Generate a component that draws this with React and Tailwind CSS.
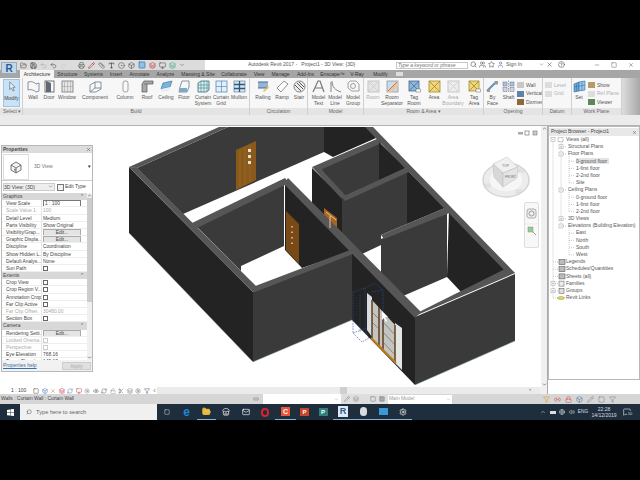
import { FolderOpen, Save, Undo2, Redo2, Printer, Pencil, Ruler, Type, CircleDot, Search, Users, Star, User, HelpCircle, Minus, Square, X, ChevronDown, ChevronUp, Settings, Volume2, Globe, MessageSquare, Store, Mail, Monitor, Sun, Box, Eye, Scissors, RefreshCw, Filter, Link2, Lock, Layers } from 'lucide-react';

const S = { fill: 'none', stroke: '#6a7a8c', strokeWidth: 0.8 };

const icons = {
  modify: <path d="M4 1.5 L4 10 L6 8 L7.6 11.5 L9 10.8 L7.4 7.5 L10 7.3 Z" fill="#dff0fb" stroke="#5a6a7a" strokeWidth="0.7" />,
  wall: <path d="M1 2 C4 1 7 2 9 4 L12 3 L12 11 L9 12 C7 10 4 9 1 10 Z" fill="#f2f2f2" {...S} />,
  door: <><rect x="2" y="1" width="9" height="11" fill="#fafafa" stroke="#555" strokeWidth="0.8" /><path d="M3 1 L8 3 L8 12 L3 12 Z" fill="#5d6975" /></>,
  window: <><rect x="1" y="1" width="11" height="11" fill="#e6e6e6" stroke="#777" strokeWidth="0.8" /><path d="M6.5 1 V12 M1 6.5 H12 M3.5 1 V12 M9.5 1 V12" stroke="#999" strokeWidth="0.5" /></>,
  component: <><path d="M1 5 L6 2 L12 2 L12 9 L7 12 L1 12 Z" fill="#ececec" {...S} /><path d="M6 2 V8 L1 12 M6 8 H12" {...S} /></>,
  column: <><rect x="4" y="1" width="5" height="11" rx="2" fill="#f8f8f8" stroke="#8a8a8a" strokeWidth="0.8" /></>,
  roof: <><path d="M1 4 L3 1 L12 1 L12 4 L6 4 L6 12 L1 12 Z" fill="#a8a8a8" stroke="#555" strokeWidth="0.7" /><path d="M3 4 H6" stroke="#555" strokeWidth="0.6" /></>,
  ceiling: <><path d="M3 3 L12 1 L10 7 L1 9 Z" fill="#78b4e0" stroke="#48789c" strokeWidth="0.7" /><path d="M1 9 L10 7 L9 11 L1 12 Z" fill="#e6eef4" /></>,
  floor: <><path d="M4 1 H11 L11 7 L9 12 H1 L2 7 Z" fill="#d6dfe8" {...S} /><path d="M1 8 L9 8 L9 12 L1 12 Z" fill="#7fa9c8" /></>,
  curtainSystem: <><path d="M1 3 L4 1 L12 1 L12 10 L9 12 L1 12 Z" fill="#d8eef0" stroke="#2f6e78" strokeWidth="0.8" /><path d="M4 1 V12 M7 1 V12 M10 1 V12 M1 5 H12 M1 8 H12" stroke="#2f6e78" strokeWidth="0.5" /></>,
  curtainGrid: <><rect x="1" y="1" width="11" height="11" fill="#e2eef8" stroke="#5b8fbc" strokeWidth="0.8" /><path d="M6.5 1 V12 M1 6.5 H12" stroke="#5b8fbc" strokeWidth="0.7" /></>,
  mullion: <><rect x="1" y="1" width="11" height="11" fill="#d8e6f2" stroke="#4a7396" strokeWidth="0.6" /><path d="M6.5 1 V12 M1 4.5 H12 M1 8.5 H12" stroke="#2e5878" strokeWidth="1.3" /></>,
  railing: <><path d="M1 2 H11 M2 2 V8 M4 2 V8 M6 2 V8 M8 2 V8 M10 2 V8 M1 8 H11" stroke="#3a6ea8" strokeWidth="1" /><path d="M6 11 L11 6 L12 7 L7 12 Z" fill="#e8b93a" /></>,
  ramp: <path d="M1 8 L8 1 L12 4 L5 12 Z" fill="#fbfbfb" stroke="#777" strokeWidth="0.8" />,
  stair: <><circle cx="6.5" cy="6.5" r="5.5" fill="#eee" stroke="#666" strokeWidth="0.8" /><path d="M2 5 L8 11 M4 3 L10 9 M6 2 L11 7" stroke="#555" strokeWidth="1" /></>,
  modelText: <path d="M1 12 L6 1 L8 1 L12 12 M3 8 H10" fill="none" stroke="#777" strokeWidth="1.2" />,
  modelLine: <path d="M3 1 C3 7 6 10 12 12 M2 2 V12" fill="none" stroke="#666" strokeWidth="0.8" />,
  modelGroup: <><path d="M3 1 H9 L12 4 V11 H5 L1 8 V3 Z" fill="none" stroke="#8a8a8a" strokeWidth="0.8" /><circle cx="6" cy="6" r="2.5" fill="none" stroke="#8a8a8a" strokeWidth="0.8" /></>,
  room: <><rect x="1" y="1" width="11" height="11" fill="#e4e4e4" stroke="#c4c4c4" /><path d="M2 2 L11 11 M11 2 L2 11" stroke="#cfcfcf" /></>,
  separator: <><rect x="1" y="1" width="11" height="11" fill="#c8dcec" stroke="#8a8a8a" strokeWidth="0.7" /><path d="M12 1 L1 12 H6 L12 6 Z" fill="#e8c89a" /><path d="M2 11 L11 2" stroke="#c05a3a" strokeWidth="0.8" /></>,
  tagRoom: <><rect x="1" y="1" width="10" height="10" fill="#8db6d8" stroke="#3f6c92" strokeWidth="0.8" /><path d="M1 1 L11 11 M11 1 L1 11" stroke="#3f6c92" strokeWidth="0.7" /><rect x="8" y="9" width="4.5" height="3" fill="#fff" stroke="#666" strokeWidth="0.5" /></>,
  area: <><rect x="1" y="1" width="11" height="11" fill="#f2d675" stroke="#a08a3c" strokeWidth="0.8" /><path d="M1 1 L12 12 M12 1 L1 12" stroke="#8f7a30" strokeWidth="0.7" /></>,
  areaBoundary: <><rect x="1" y="1" width="11" height="11" fill="#ececec" stroke="#c8c8c8" /><path d="M2 2 L11 11 M11 2 L2 11" stroke="#d4d4d4" /></>,
  tagArea: <><rect x="1" y="1" width="10" height="10" fill="#f2d675" stroke="#a08a3c" strokeWidth="0.8" /><path d="M1 1 L11 11 M11 1 L1 11" stroke="#8f7a30" strokeWidth="0.7" /><rect x="8" y="9" width="4.5" height="3" fill="#fff" stroke="#666" strokeWidth="0.5" /></>,
  byFace: <><path d="M1 11 L9 3" stroke="#5b95c8" strokeWidth="2.2" /><rect x="8.5" y="1" width="3.5" height="3.5" fill="#9a9a9a" /><rect x="1" y="9" width="3" height="3" fill="#9a9a9a" /></>,
  shaft: <><path d="M6.5 0.5 V12.5" stroke="#777" strokeWidth="0.7" strokeDasharray="1.5 1" /><rect x="1" y="2" width="4" height="4" fill="#a9c3da" stroke="#557" strokeWidth="0.4" /><rect x="8" y="2" width="4" height="4" fill="#a9c3da" stroke="#557" strokeWidth="0.4" /><rect x="1" y="7.5" width="4" height="4" fill="#cfd8e0" stroke="#557" strokeWidth="0.4" /><rect x="8" y="7.5" width="4" height="4" fill="#cfd8e0" stroke="#557" strokeWidth="0.4" /></>,
  set: <><path d="M1 4 L6 2 L6 11 L1 12 Z" fill="#6ea6d8" stroke="#2f6ea4" strokeWidth="0.6" /><path d="M6 2 L12 1 L12 10 L6 11 Z" fill="#9cc6e8" stroke="#2f6ea4" strokeWidth="0.6" /><path d="M1 7 L12 5 M3.5 3 V11.5 M9 1.5 V10.5" stroke="#2f6ea4" strokeWidth="0.5" /></>,
};

function Tool({ w, label, sub, icon, dim }) {
  return (
    <div className={`${w} shrink-0 flex flex-col items-center pt-[2px] ${dim ? 'text-[#aaaaaa]' : 'text-[#555555]'}`}>
      <svg width="13" height="13" viewBox="0 0 13 13">{icons[icon]}</svg>
      <div className="mt-px text-[5px] leading-[6px] whitespace-nowrap">{label}</div>
      {sub && <div className="text-[5px] leading-[6px] whitespace-nowrap">{sub}</div>}
    </div>
  );
}

function Group({ w, title, arrow, children }) {
  return (
    <div className={`${w} shrink-0 flex flex-col border-r border-[#d0d0d0]`}>
      <div className="h-[30px] flex overflow-hidden">{children}</div>
      <div className="h-[7px] bg-[#e4e4e4] text-center text-[5px] leading-[7px] text-[#666666] whitespace-nowrap">
        {title}{arrow && ' ▾'}
      </div>
    </div>
  );
}

function MiniRow({ color, label, dim }) {
  return (
    <div className={`flex items-center gap-[2px] h-[8.5px] text-[5px] whitespace-nowrap ${dim ? 'text-[#b0b0b0]' : 'text-[#555555]'}`}>
      <span className={`w-[7px] h-[6px] shrink-0 ${color}`} />
      {label}
    </div>
  );
}

const tabs = [
  ['Architecture', 'w-[34px]'], ['Structure', 'w-[27px]'], ['Systems', 'w-[25px]'], ['Insert', 'w-[20px]'],
  ['Annotate', 'w-[27px]'], ['Analyze', 'w-[25px]'], ['Massing & Site', 'w-[40px]'], ['Collaborate', 'w-[32px]'],
  ['View', 'w-[18px]'], ['Manage', 'w-[25px]'], ['Add-Ins', 'w-[25px]'], ['Enscape™', 'w-[29px]'],
  ['V-Ray', 'w-[20px]'], ['Modify', 'w-[27px]'],
];

function TitleBar() {
  const q = 'shrink-0';
  return (
    <div className="h-[10px] flex items-center bg-white relative">
      <div className="w-[205px] h-full bg-[#dcdcdc] flex items-center gap-[3px] pl-[20px] text-[#555555]">
        <FolderOpen size={7} className={q} />
        <Save size={7} className={q} color="#222" />
        <Undo2 size={7} className={q} color="#aaa" />
        <Undo2 size={7} className={q} />
        <Redo2 size={7} className={q} color="#ccc" />
        <span className="w-[5px]" />
        <Printer size={7} className={q} />
        <Pencil size={7} className={q} color="#a33" />
        <Ruler size={7} className={q} />
        <Type size={7} className={q} color="#222" />
        <CircleDot size={7} className={q} />
        <Box size={7} className={q} />
        <Square size={8} className={q} fill="#8fc0e8" color="#2f6ea4" />
        <Layers size={7} className={q} color="#b33" />
        <Monitor size={7} className={q} />
        <Layers size={7} className={q} color="#3a7" />
        <ChevronDown size={6} className={q} />
      </div>
      <div className="w-[191px] shrink-0 pl-[43px] text-[5px] text-[#555555] whitespace-nowrap">Autodesk Revit 2017 -&nbsp;&nbsp; Project1 - 3D View: {'{3D}'}</div>
      <div className="w-[72px] h-[7px] shrink-0 bg-white border border-[#c8c8c8] text-[5px] leading-[5px] pl-[1px] italic text-[#777777] whitespace-nowrap">Type a keyword or phrase</div>
      <div className="flex items-center gap-[2px] pl-[2px] text-[#555555]">
        <Search size={7} />
        <Users size={7} />
        <Star size={7} />
        <User size={7} color="#4477aa" />
        <span className="text-[5.2px] whitespace-nowrap">Sign In</span>
        <ChevronDown size={5} className="ml-[15px]" />
        <X size={7} color="#2f5f8f" />
        <HelpCircle size={7} className="ml-[3px]" />
      </div>
      <div className="ml-auto flex items-center gap-[11px] pr-[6px] text-[#666666]">
        <Minus size={6} />
        <Square size={6} />
        <X size={6} />
      </div>
      <div className="absolute left-[1px] top-[2px] w-[16px] h-[12px] z-10 bg-[#c4d6e8] border border-[#9ab] flex items-center justify-center text-[10px] font-bold text-[#1f5f99]">R</div>
    </div>
  );
}

function TabBar() {
  return (
    <div className="h-[8px] bg-[#a6a6a6] flex items-end pl-[20px] text-[5px] text-[#333333]">
      {tabs.map(([t, w], i) => (
        <div key={t} className={`${w} shrink-0 h-full text-center leading-[8px] whitespace-nowrap ${i === 0 ? 'bg-[#f5f5f5]' : ''}`}>{t}</div>
      ))}
      <span className="ml-[2px] w-[7px] h-[4px] bg-[#dddddd] self-center" />
    </div>
  );
}

function Ribbon() {
  return (
    <div className="h-[37px] flex bg-[#f7f7f7]">
      <div className="w-[23px] shrink-0 flex flex-col border-r border-[#d0d0d0]">
        <div className="h-[30px] pl-[3px] pt-px">
          <div className="w-[17px] h-[28px] bg-[#c9e2f5] border border-[#9cc4e4] flex flex-col items-center text-[5px] leading-[6px] text-[#444444]">
            <svg width="12" height="13" viewBox="0 0 13 13">{icons.modify}</svg>
            <div className="mt-[2px]">Modify</div>
          </div>
        </div>
        <div className="h-[7px] bg-[#e4e4e4] pl-[3px] text-[5px] leading-[7px] text-[#666666] whitespace-nowrap">Select ▾</div>
      </div>
      <Group w="w-[227px]" title="Build">
        <span className="w-[2px]" />
        <Tool w="w-[16px]" label="Wall" icon="wall" />
        <Tool w="w-[16px]" label="Door" icon="door" />
        <Tool w="w-[20px]" label="Window" icon="window" />
        <Tool w="w-[36px]" label="Component" icon="component" />
        <Tool w="w-[24px]" label="Column" icon="column" />
        <Tool w="w-[20px]" label="Roof" icon="roof" />
        <Tool w="w-[18px]" label="Ceiling" icon="ceiling" />
        <Tool w="w-[18px]" label="Floor" icon="floor" />
        <Tool w="w-[20px]" label="Curtain" sub="System" icon="curtainSystem" />
        <Tool w="w-[16px]" label="Curtain" sub="Grid" icon="curtainGrid" />
        <Tool w="w-[20px]" label="Mullion" icon="mullion" />
      </Group>
      <Group w="w-[58px]" title="Circulation">
        <span className="w-[3px]" />
        <Tool w="w-[20px]" label="Railing" icon="railing" />
        <Tool w="w-[18px]" label="Ramp" icon="ramp" />
        <Tool w="w-[16px]" label="Stair" icon="stair" />
      </Group>
      <Group w="w-[56px]" title="Model">
        <span className="w-[2px]" />
        <Tool w="w-[17px]" label="Model" sub="Text" icon="modelText" />
        <Tool w="w-[16px]" label="Model" sub="Line" icon="modelLine" />
        <Tool w="w-[20px]" label="Model" sub="Group" icon="modelGroup" />
      </Group>
      <Group w="w-[120px]" title="Room & Area" arrow>
        <Tool w="w-[18px]" label="Room" icon="room" dim />
        <Tool w="w-[20px]" label="Room" sub="Separator" icon="separator" />
        <Tool w="w-[24px]" label="Tag" sub="Room" icon="tagRoom" />
        <Tool w="w-[16px]" label="Area" icon="area" />
        <Tool w="w-[22px]" label="Area" sub="Boundary" icon="areaBoundary" dim />
        <Tool w="w-[20px]" label="Tag" sub="Area" icon="tagArea" />
      </Group>
      <Group w="w-[59px]" title="Opening">
        <Tool w="w-[17px]" label="By" sub="Face" icon="byFace" />
        <Tool w="w-[15px]" label="Shaft" icon="shaft" />
        <div className="pt-[3px] pl-[1px]">
          <MiniRow color="bg-[#c8c8c8]" label="Wall" />
          <MiniRow color="bg-[#5b84a8]" label="Vertical" />
          <MiniRow color="bg-[#8a6a3a]" label="Dormer" />
        </div>
      </Group>
      <Group w="w-[29px]" title="Datum">
        <div className="pt-[3px] pl-[2px]">
          <MiniRow color="bg-[#dddddd]" label="Level" dim />
          <MiniRow color="bg-[#dddddd]" label="Grid" dim />
        </div>
      </Group>
      <Group w="w-[50px]" title="Work Plane">
        <Tool w="w-[14px]" label="Set" icon="set" />
        <div className="pt-[3px] pl-[2px]">
          <MiniRow color="bg-[#b89a6a]" label="Show" />
          <MiniRow color="bg-[#dddddd]" label="Ref  Plane" dim />
          <MiniRow color="bg-[#5a8a5a]" label="Viewer" />
        </div>
      </Group>
      <div className="flex-1 bg-gradient-to-r from-[#dddddd] to-[#a8a8a8]" />
    </div>
  );
}

const graphics = [
  ['View Scale', '1 : 100', 'input'], ['Scale Value    1:', '100', 'dim'], ['Detail Level', 'Medium'],
  ['Parts Visibility', 'Show Original'], ['Visibility/Grap...', 'Edit...', 'btn'], ['Graphic Displa...', 'Edit...', 'btn'],
  ['Discipline', 'Coordination'], ['Show Hidden L...', 'By Discipline'], ['Default Analys...', 'None'], ['Sun Path', '', 'check'],
];
const extents = [
  ['Crop View', '', 'check'], ['Crop Region V...', '', 'check'], ['Annotation Crop', '', 'check'], ['Far Clip Active', '', 'check'],
  ['Far Clip Offset', '30480.00', 'dim'], ['Section Box', '', 'check'],
];
const camera = [
  ['Rendering Setti...', 'Edit...', 'btn'], ['Locked Orienta...', '', 'dimcheck'], ['Perspective', '', 'dimcheck'], ['Eye Elevation', '768.16'], ['Target Elevation', '145.18'],
];

function PropRow({ row }) {
  const [k, v, t] = row;
  const dim = t === 'dim' || t === 'dimcheck';
  return (
    <div className="h-[7.2px] flex text-[4.9px] leading-[7px] border-b border-[#eeeeee] whitespace-nowrap overflow-hidden">
      <div className={`w-[40px] shrink-0 pl-[4px] overflow-hidden border-r border-[#e4e4e4] ${dim ? 'text-[#aaaaaa]' : 'text-[#444444]'}`}>{k}</div>
      <div className={`flex-1 pl-px ${dim ? 'text-[#aaaaaa]' : 'text-[#444444]'}`}>
        {t === 'btn' && <div className="w-[38px] h-[7px] bg-[#e4e4e4] border border-[#aaaaaa] text-center leading-[5px]">{v}</div>}
        {t === 'input' && <div className="w-[38px] h-[7px] bg-white border border-[#777777] leading-[5px] pl-px">{v}</div>}
        {(t === 'check' || t === 'dimcheck') && <div className={`w-[5px] h-[5px] mt-px bg-white border ${t === 'check' ? 'border-[#666666]' : 'border-[#cccccc]'}`} />}
        {(!t || t === 'dim') && v}
      </div>
    </div>
  );
}

function SectionHead({ title }) {
  return (
    <div className="h-[7.2px] bg-[#d8d8d8] flex justify-between px-[1px] text-[4.9px] leading-[7px] text-[#444444]">
      <span>{title}</span>
      <span className="pr-[2px]">⌃</span>
    </div>
  );
}

function Properties() {
  return (
    <div className="w-[97px] shrink-0 pt-[19px] pl-[1px]">
      <div className="w-[92px] h-[227px] bg-white border border-[#b8b8b8] flex flex-col">
        <div className="h-[7px] bg-[#dcdcdc] flex justify-between items-center px-[1px] text-[5px] font-bold text-[#444444]">
          Properties <X size={5} />
        </div>
        <div className="h-[27px] mt-px flex items-center border-b border-[#cccccc]">
          <div className="w-[26px] h-[26px] ml-px border border-[#dddddd] flex items-center justify-center">
            <svg width="12" height="13" viewBox="0 0 12 13">
              <path d="M6 1 L11 4 V9 L6 12 L1 9 V4 Z" fill="#f4f4f4" stroke="#555" strokeWidth="0.8" />
              <path d="M1 4 L6 7 L11 4 M6 7 V12" fill="none" stroke="#555" strokeWidth="0.8" />
              <path d="M4 9 V7.5 L6 8.5 V11 Z" fill="#7a8a96" />
            </svg>
          </div>
          <span className="ml-[5px] text-[5px] text-[#777777]">3D View</span>
          <span className="ml-auto mr-[1px] text-[5px] text-[#222222]">▾</span>
        </div>
        <div className="h-[12px] flex items-center text-[5px] text-[#444444]">
          <div className="w-[52px] h-[8px] ml-px bg-[#eeeeee] border border-[#cccccc] flex justify-between pr-px leading-[6px] whitespace-nowrap">
            3D View: (3D)<ChevronDown size={5} />
          </div>
          <div className="ml-[2px] w-[7px] h-[7px] border border-[#777777] bg-[#eef2f6]" />
          <span className="ml-px whitespace-nowrap">Edit Type</span>
        </div>
        <div className="flex-1 flex overflow-hidden">
          <div className="w-[85px] shrink-0 overflow-hidden">
            <SectionHead title="Graphics" />
            {graphics.map(r => <PropRow key={r[0]} row={r} />)}
            <SectionHead title="Extents" />
            {extents.map(r => <PropRow key={r[0]} row={r} />)}
            <SectionHead title="Camera" />
            {camera.map(r => <PropRow key={r[0]} row={r} />)}
          </div>
          <div className="flex-1 bg-[#f0f0f0] flex flex-col items-center justify-between">
            <ChevronUp size={5} />
            <div className="w-full h-[104px] bg-[#cdcdcd] mb-auto" />
            <ChevronDown size={5} />
          </div>
        </div>
        <div className="h-[11px] bg-[#f2f2f2] flex items-center justify-between pr-px text-[5px]">
          <span className="pl-px text-[#3a6ea8] underline whitespace-nowrap">Properties help</span>
          <span className="w-[29px] h-[8px] bg-[#e0e0e0] border border-[#cccccc] text-center leading-[6px] text-[#aaaaaa]">Apply</span>
        </div>
      </div>
    </div>
  );
}

const FACE = '#3a3a3a', DARK = '#232323', BAND = '#565656';
const model = [
  ['137,168 228,127 324,127 324,152 183,214', FACE],
  ['324,127 368,127 376,138 333,157 324,152', DARK],
  ['129,167 219,127 228,127 137,168', BAND],
  ['129,167 253,292 253,362 129,233', DARK],
  ['197,227 284,183 284,246 241,266 241,271', FACE],
  ['285,180 347,246 352,251 302,268 285,250', DARK],
  ['286,211 299,224 299,264 286,250', '#7a4a16'],
  ['192,223 285,178 289,183 197,228', BAND],
  ['129,167 137,167.5 260,290 253,292', BAND],
  ['312,168 342,197 342,233 312,203', DARK],
  ['324,208 337,218 337,232 324,220', '#a5651f'],
  ['320,168 379,142 379,181 343,197', FACE],
  ['312,167 320,168 347,197 342,199', BAND],
  ['312,167 379,138 384,142 320,170', BAND],
  ['379,142 407,169 379,181', DARK],
  ['342,198 407,170 407,224 381,235 381,245 362,254 342,233', FACE],
  ['407,170 445,208 407,224', DARK],
  ['342,197 407,167 411,171 345,201', BAND],
  ['381,239 447,211 447,277 403,296 381,275', FACE],
  ['449,210 507,272 462,293 447,277', DARK],
  ['381,235 447,207 452,212 384,239', BAND],
  ['365,127 373,127 515,273 507,273', BAND],
  ['253,292 352,253 352,320 253,362', FACE],
  ['250,288 350,250 353,254 255,292', BAND],
  ['352,253 415,317 415,385 352,320', DARK],
  ['284,184 288,178 421,312 415,318', BAND],
  ['415,317 515,274 515,341 415,385', FACE],
  ['415,316 515,273 507,268 421,311', BAND],
];

function Model() {
  return (
    <svg className="absolute inset-0" width="444" height="261" viewBox="97 126 444 261">
      {model.map(([p, c]) => <polygon key={p} points={p} fill={c} />)}
      <path d="M129 233 L253 362 L352 320 M415 385 L515 341" fill="none" stroke="#9fc79f" strokeWidth="0.5" />
      {/* upper door */}
      <polygon points="236,150 256,141 256,180 236,190" fill="#8a5a1c" />
      <path d="M240 150 V187 M245 147 V185 M250 145 V182" stroke="#9c6a28" strokeWidth="0.8" />
      <rect x="248" y="149" width="3" height="3" fill="#e8e0d0" />
      <rect x="248" y="155" width="3" height="3" fill="#e8e0d0" />
      <rect x="248" y="161" width="3" height="3" fill="#e8e0d0" />
      <path d="M292 226 V247" stroke="#d8d0c0" strokeWidth="1.5" strokeDasharray="1.5 4" />
      <path d="M326 212 L336 220 M330 216 V228" stroke="#e8c9a0" strokeWidth="1" />
      {/* glazed door in the selected wall */}
      <polygon points="367,293 372,297 372,337 367,330" fill="#d9dde0" />
      <polygon points="395,323 402,328 402,370 395,363" fill="#e4e6e4" />
      <polygon points="372,300 395,325 395,363 372,338" fill="#c4c4c0" />
      <path d="M372 300 V338 M379 307 V346 M383 312 V350 M395 325 V363" stroke="#5a3413" strokeWidth="1.4" />
      <path d="M383 322 L395 335 M383 332 L395 345 M383 342 L395 355 M372 312 L379 319 M372 322 L379 329" stroke="#6a5a48" strokeWidth="0.6" />
      <path d="M371 338 L396 363" stroke="#c07a1e" strokeWidth="2" />
      <path d="M353 292 L365 288 L375 283 L383 290 V328 M353 292 V333 L362 342 L369 338 M365 288 V330 L369 338 M353 333 L367 328 M372 292 L383 290 M360 295 V332" fill="none" stroke="#2c4fa0" strokeWidth="0.6" strokeDasharray="1.6 1" />
      <path d="M382 311 V320 L384 318 L386 322 L387 321 L385 317 L388 317 Z" fill="#fff" />
      {/* view cube */}
      <ellipse cx="506" cy="180" rx="23" ry="17" fill="#ececec" stroke="#d4d4d4" strokeWidth="1.5" />
      <ellipse cx="506" cy="180" rx="17" ry="12" fill="#f6f6f6" stroke="#e0e0e0" strokeWidth="0.5" />
      <polygon points="493,164 507,157 518,167 503,173" fill="#f0f0f0" stroke="#bbb" strokeWidth="0.5" />
      <polygon points="493,164 503,173 503,187 494,177" fill="#d8d8d8" stroke="#bbb" strokeWidth="0.5" />
      <polygon points="503,173 518,167 517,178 503,187" fill="#e4e4e4" stroke="#bbb" strokeWidth="0.5" />
      <text x="502" y="167" fontSize="3.5" fill="#777">TOP</text>
      <text x="505" y="178" fontSize="3.2" fill="#666">FRONT</text>
      <rect x="485" y="184" width="5" height="3" fill="#e4e4e4" stroke="#ccc" strokeWidth="0.4" />
      <rect x="516" y="190" width="5" height="3" fill="#e4e4e4" stroke="#ccc" strokeWidth="0.4" />
      <rect x="519" y="169" width="5" height="3" fill="#e4e4e4" stroke="#ccc" strokeWidth="0.4" />
      {/* navigation bar */}
      <rect x="524.5" y="202.5" width="14" height="45" rx="1.5" fill="#f8f8f8" stroke="#d0d0d0" strokeWidth="0.7" />
      <rect x="527" y="209" width="9" height="9" rx="2" fill="#eee" stroke="#999" strokeWidth="0.8" />
      <circle cx="531.5" cy="213.5" r="2.5" fill="none" stroke="#888" strokeWidth="0.8" />
      <path d="M525 224 H538" stroke="#ddd" strokeWidth="0.5" />
      <rect x="528" y="227" width="5" height="5" fill="#9cc79c" stroke="#6fa06f" strokeWidth="0.5" />
      <path d="M533 232 L536 235" stroke="#6f8f6f" strokeWidth="0.8" />
      {/* view state icons */}
      <rect x="518" y="132" width="5" height="2.5" fill="#aaa" />
      <rect x="525" y="131" width="4" height="4" fill="none" stroke="#888" strokeWidth="0.8" />
      <rect x="533" y="131" width="4" height="4" fill="#ccc" stroke="#777" strokeWidth="0.6" />
    </svg>
  );
}

function ViewBar() {
  const small = [
    [Square, '#555'], [Box, '#3a78b8'], [X, '#d08a2a'], [Layers, '#c24'], [RefreshCw, '#5a8abf'], [Monitor, '#b55'],
    [Sun, '#778'], [Eye, '#666'], [RefreshCw, '#666'], [Lock, '#999'], [Scissors, '#777'], [Layers, '#777'], [Settings, '#777'], [Filter, '#557'],
  ];
  return (
    <div className="h-[7px] flex bg-[#eeeeee]">
      <div className="w-[157px] shrink-0 bg-white flex items-center">
        <span className="w-[33px] shrink-0 pl-[11px] text-[5px] text-[#444444] whitespace-nowrap">1 : 100</span>
        <div className="flex items-center gap-[2.5px]">
          {small.map(([Ic, c], i) => <Ic key={i} size={6} color={c} className="shrink-0" />)}
          <ChevronDown size={5} className="rotate-90 shrink-0" />
        </div>
      </div>
      <div className="flex-1 bg-[#ebebeb] relative">
        <div className="absolute left-[183px] top-0 w-[7px] h-full bg-[#cfcfcf]" />
        <span className="absolute right-[9px] -top-[1px] text-[5px] text-[#333333]">›</span>
      </div>
      <div className="w-[7px] bg-[#f0f0f0]" />
    </div>
  );
}

const tree = [
  ['Views (all)', 'pl-[17px]'],
  ['Structural Plans', 'pl-[19px]'],
  ['Floor Plans', 'pl-[19px]'],
  ['0-ground floor', 'pl-[27px]', 'sel'],
  ['1-first floor', 'pl-[27px]'],
  ['2-2nd floor', 'pl-[27px]'],
  ['Site', 'pl-[27px]'],
  ['Ceiling Plans', 'pl-[19px]'],
  ['0-ground floor', 'pl-[27px]'],
  ['1-first floor', 'pl-[27px]'],
  ['2-2nd floor', 'pl-[27px]'],
  ['3D Views', 'pl-[19px]'],
  ['Elevations (Building Elevation)', 'pl-[19px]'],
  ['East', 'pl-[27px]'],
  ['North', 'pl-[27px]'],
  ['South', 'pl-[27px]'],
  ['West', 'pl-[27px]'],
  ['Legends', 'pl-[17px]'],
  ['Schedules/Quantities', 'pl-[17px]'],
  ['Sheets (all)', 'pl-[17px]'],
  ['Families', 'pl-[17px]'],
  ['Groups', 'pl-[17px]'],
  ['Revit Links', 'pl-[17px]'],
];

// tree connectors, expanders and node icons, in panel coordinates (row pitch 7.2)
const rowY = i => 3.6 + i * 7.2;
function TreeLines() {
  const sub = [1, 2, 7, 11, 12];
  const leaves = [3, 4, 5, 6, 8, 9, 10, 13, 14, 15, 16];
  const plus = [1, 11, 20, 21];
  const minus = [0, 2, 7, 12];
  const top = [17, 18, 19];
  return (
    <svg className="absolute left-0 top-0" width="92" height="170" viewBox="0 0 92 170">
      <g stroke="#999" strokeWidth="0.5" strokeDasharray="1 1" fill="none">
        <path d={`M4 ${rowY(0)} V${rowY(22)} M12 ${rowY(0)} V${rowY(12)} M20 ${rowY(2)} V${rowY(6)} M20 ${rowY(7)} V${rowY(10)} M20 ${rowY(12)} V${rowY(16)}`} />
        {sub.map(i => <path key={i} d={`M12 ${rowY(i)} H18`} />)}
        {leaves.map(i => <path key={i} d={`M20 ${rowY(i)} H26`} />)}
        {[17, 18, 19, 20, 21, 22].map(i => <path key={i} d={`M4 ${rowY(i)} H10`} />)}
      </g>
      {[...plus, ...minus].map(i => {
        const x = i === 0 || i >= 20 ? 4 : 12;
        const y = rowY(i);
        return (
          <g key={i} stroke="#888" strokeWidth="0.4">
            <rect x={x - 2} y={y - 2} width="4" height="4" fill="#fff" />
            <path d={`M${x - 1} ${y} H${x + 1}`} />
            {plus.includes(i) && <path d={`M${x} ${y - 1} V${y + 1}`} />}
          </g>
        );
      })}
      <rect x="9" y={rowY(0) - 2} width="5" height="4" fill="#fff" stroke="#666" strokeWidth="0.5" strokeDasharray="1 0.5" />
      {top.map(i => <rect key={i} x="10" y={rowY(i) - 2.5} width="6" height="5" fill="#bbb" stroke="#444" strokeWidth="0.5" />)}
      <rect x="10" y={rowY(20) - 2.5} width="5" height="5" fill="#eee" stroke="#555" strokeWidth="0.5" />
      <rect x="10" y={rowY(21) - 2.5} width="5" height="5" fill="#ddd" stroke="#555" strokeWidth="0.5" />
      <ellipse cx="12" cy={rowY(22)} rx="3.5" ry="1.5" fill="#e8d84a" stroke="#776" strokeWidth="0.4" />
    </svg>
  );
}

function Browser() {
  return (
    <div className="w-[92px] shrink-0 bg-white flex flex-col">
      <div className="h-[254px] border border-[#b8b8b8] bg-white">
        <div className="h-[8px] mt-px bg-[#e8e8e8] flex items-center justify-between px-[2px] text-[5px] text-[#444444] whitespace-nowrap">
          Project Browser - Project1 <X size={5} />
        </div>
        <div className="relative">
          <TreeLines />
          {tree.map(([t, pl, sel], i) => (
            <div key={i} className={`h-[7.2px] ${pl} text-[5px] leading-[7px] text-[#555555] whitespace-nowrap relative`}>
              <span className={sel === 'sel' ? 'bg-[#e4e4e4] pr-[2px]' : ''}>{t}</span>
            </div>
          ))}
        </div>
      </div>
    </div>
  );
}

function StatusBar() {
  return (
    <div className="h-[10px] bg-[#d6d6d6] flex items-center text-[4.9px] text-[#444444] whitespace-nowrap">
      <span className="w-[253px] shrink-0 pl-px">Walls : Curtain Wall : Curtain Wall</span>
      <span className="w-[10px] shrink-0"><Link2 size={6} color="#777" /></span>
      <div className="w-[78px] h-full bg-white shrink-0 flex items-center justify-end pr-[2px]"><ChevronDown size={5} color="#999" /></div>
      <div className="w-[47px] h-full shrink-0 bg-[#dedede] flex items-center gap-[3px] pl-[3px]">
        <Pencil size={6} color="#888" />
        <Layers size={6} color="#888" />
        <Square size={6} color="#777" className="ml-[8px]" />
        <Square size={6} color="#777" fill="#aaa" />
      </div>
      <div className="w-[64px] h-[9px] bg-white shrink-0 flex items-center justify-between px-px text-[#999999]">
        Main Model <ChevronDown size={5} />
      </div>
      <div className="ml-[91px] flex items-center gap-[4px]">
        <Filter size={7} color="#d8a42a" />
        <Link2 size={7} color="#c55" />
        <Lock size={7} color="#c55" />
        <Box size={7} color="#5a7a9a" />
        <Pencil size={7} color="#888" />
        <Square size={7} color="#888" />
        <Filter size={7} color="#888" />
      </div>
    </div>
  );
}

function Slot({ w, on, children }) {
  return <div className={`${w} shrink-0 h-full flex items-center justify-center ${on ? 'border-b border-[#7fb4dc]' : ''}`}>{children}</div>;
}

function Taskbar() {
  return (
    <div className="h-[16px] bg-[#1f2e3c] flex items-center text-white">
      <div className="w-[20px] shrink-0 flex justify-center">
        <svg width="7" height="7" viewBox="0 0 8 8"><path d="M0 1 L3.5 .5 V3.8 H0 Z M4 .4 L8 0 V3.8 H4 Z M0 4.2 H3.5 V7.5 L0 7 Z M4 4.2 H8 V8 L4 7.6 Z" fill="#fff" /></svg>
      </div>
      <div className="w-[137px] shrink-0 h-full bg-[#f0f0f0] flex items-center pl-[6px] gap-[4px] text-[5.7px] text-[#666666] whitespace-nowrap">
        <Search size={6} color="#555" className="-scale-x-100" />
        Type here to search
      </div>
      <Slot w="w-[19px]"><Square size={6} color="#ddd" /></Slot>
      <Slot w="w-[21px]"><span className="text-[12px] leading-none font-bold text-[#1c86d8]">e</span></Slot>
      <Slot w="w-[19px]" on><FolderOpen size={9} color="#f0c850" fill="#e8b93a" /></Slot>
      <Slot w="w-[20px]"><Store size={8} color="#f4f4f4" /></Slot>
      <Slot w="w-[19px]"><Mail size={8} color="#f4f4f4" /></Slot>
      <Slot w="w-[20px]"><span className="w-[8px] h-[9px] rounded-full border-2 border-[#d8232a]" /></Slot>
      <Slot w="w-[21px]" on><span className="w-[9px] h-[9px] bg-[#e8553a] text-[7px] leading-[9px] text-center font-bold">C</span></Slot>
      <Slot w="w-[17px]"><span className="w-[9px] h-[8px] bg-[#c9432a] text-[6px] leading-[8px] text-center font-bold">P</span></Slot>
      <Slot w="w-[20px]"><span className="w-[9px] h-[8px] bg-[#2f7f7a] text-[6px] leading-[8px] text-center font-bold">P</span></Slot>
      <Slot w="w-[20px]" on><span className="w-[10px] h-[11px] bg-[#dfe8f0] text-[9px] leading-[11px] text-center font-bold text-[#1f5f99]">R</span></Slot>
      <Slot w="w-[20px]" on><span className="w-[7px] h-[9px] rounded-full bg-[#d8dde0]" /></Slot>
      <Slot w="w-[20px]" on><span className="w-[9px] h-[7px] bg-[#3a9ad8]" /></Slot>
      <Slot w="w-[19px]" on><Settings size={8} color="#fff" /></Slot>
      <div className="ml-auto flex items-center h-full text-[#d8dde0]">
        <Slot w="w-[10px]"><ChevronUp size={6} /></Slot>
        <Slot w="w-[9px]"><span className="w-[6px] h-[3px] bg-[#d8dde0]" /></Slot>
        <Slot w="w-[10px]"><Globe size={6} /></Slot>
        <Slot w="w-[10px]"><Volume2 size={6} /></Slot>
        <Slot w="w-[12px]"><span className="text-[4.8px]">ENG</span></Slot>
        <div className="w-[30px] text-center text-[5px] leading-[6.5px] whitespace-nowrap">22:28<br />14/12/2019</div>
        <div className="w-[21px] shrink-0 pl-[4px] relative">
          <MessageSquare size={8} />
          <span className="absolute left-[8px] top-[3px] w-[6px] h-[5px] rounded-full bg-[#1f2e3c] text-[4px] leading-[5px] text-center">10</span>
        </div>
      </div>
    </div>
  );
}

export default function App() {
  return (
    <div className="w-[640px] h-[480px] bg-black overflow-hidden font-['Liberation_Sans',Arial,sans-serif]">
      <div className="h-[60px]" />
      <TitleBar />
      <TabBar />
      <Ribbon />
      <div className="h-[11px] bg-[#ebebeb] border-b border-[#b4b4b4]" />
      <div className="h-[268px] flex bg-white">
        <div className="w-[548px] shrink-0 flex flex-col border-r border-[#aaaaaa]">
          <div className="h-[261px] flex">
            <Properties />
            <div className="w-[444px] shrink-0 relative overflow-hidden">
              <Model />
            </div>
            <div className="flex-1 bg-[#f0f0f0] flex flex-col items-center justify-between">
              <ChevronUp size={5} />
              <ChevronDown size={5} />
            </div>
          </div>
          <ViewBar />
        </div>
        <Browser />
      </div>
      <StatusBar />
      <Taskbar />
    </div>
  );
}
